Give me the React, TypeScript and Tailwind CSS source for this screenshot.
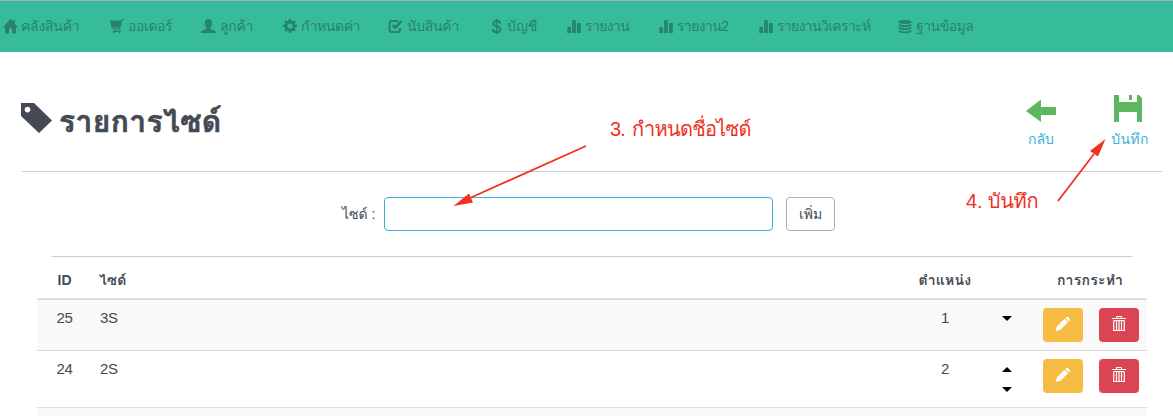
import type { ReactNode } from "react";

const thai = "font-['Liberation_Sans','Loma',sans-serif]";

const HomeIcon = () => (
  <svg className="h-[15px] w-[15px]" viewBox="0 0 15 15" fill="currentColor"><path d="M7.5 0 9.5 2.300V1h2.200v3.500L15 8.300h-2V14.500H9V9.500H6v5H2V8.300H0z" /></svg>
);
const CartIcon = () => (
  <svg className="h-[15px] w-[15px]" viewBox="0 0 15 15" fill="currentColor"><path d="M0 1.500h10.700L11.300.200H14v1.100h-1.800l-2.200 9H2.300v-1H9.100V8.600H1.500z" /><path d="M3 11.500h7l1 .8-.7 1.700H8.600v-1H4.800v1H3z" /></svg>
);
const UserIcon = () => (
  <svg className="h-[15px] w-[15px]" viewBox="0 0 15 15" fill="currentColor"><path d="M7.400 0C9.700 0 11 1.500 11 4c0 2-.6 3.500-1.600 4.600v1.100l4 1.800c1.100.5 1.600 1 1.600 2.500H0c0-1.500.5-2 1.600-2.500l3.800-1.800V8.600C4.400 7.500 3.800 6 3.800 4 3.800 1.500 5.100 0 7.400 0z" /></svg>
);
const GearIcon = () => (
  <svg className="h-[14px] w-[14px]" viewBox="0 0 14 14"><circle cx="7" cy="7" r="4" fill="none" stroke="currentColor" strokeWidth="2.800" /><path d="M7 0v2.500M7 11.500V14M0 7h2.500M11.500 7H14M2.050 2.050l1.800 1.800M10.150 10.150l1.800 1.800M11.950 2.050l-1.800 1.800M3.850 10.150l-1.800 1.800" fill="none" stroke="currentColor" strokeWidth="2.400" /></svg>
);
const CheckIcon = () => (
  <svg className="h-[15px] w-[15px]" viewBox="0 0 15 15" fill="none" stroke="currentColor"><path d="M10 2H4Q1.500 2 1.500 4.500v6Q1.500 13 4 13h5.500q2.500 0 2.500-2.500V9" strokeWidth="2" /><path d="m4.700 6 2.500 2.600L13.300 2.200" strokeWidth="2.600" /></svg>
);
const DollarIcon = () => (
  <svg className="h-[15px] w-[15px]" viewBox="0 0 15 15" fill="none" stroke="currentColor"><path d="M4.700 0v15" strokeWidth="1.600" /><path d="M8.300 4.600C8 2.700 6.500 2 4.600 2 2.500 2 1.300 3 1.300 4.600c0 3.500 7.300 1.800 7.300 5.600 0 2-1.500 2.900-3.900 2.900-2.300 0-3.700-1.100-3.900-3.100" strokeWidth="2" /></svg>
);
const StatsIcon = () => (
  <svg className="h-[15px] w-[15px]" viewBox="0 0 15 15" fill="currentColor"><rect x=".3" y="8" width="3.700" height="6" rx=".5" /><rect x="5.200" y="1" width="3.600" height="13" rx=".5" /><rect x="10" y="4" width="3.700" height="10" rx=".5" /></svg>
);
const DatabaseIcon = () => (
  <svg className="h-[15px] w-[15px]" viewBox="0 0 15 15" fill="currentColor"><path d="M.5 2.600C.5.300 13.500.300 13.500 2.600v.7c0 2.300-13 2.300-13 0zM.5 4.900q6.500 2.500 13 0v1.500q-1 1.500-6.500 1.500T.5 6.400zM.5 8.100q6.500 2.500 13 0v1.500q-1 1.500-6.500 1.500T.5 9.600zM.5 11.200q6.500 2.500 13 0v1.400q-1 1.700-6.500 1.700T.5 12.600z" /></svg>
);

const navItems: { label: string; icon: ReactNode; box: string }[] = [
  { label: "คลังสินค้า", icon: <HomeIcon />, box: "w-[107px] gap-[3px] tracking-[-0.25px]" },
  { label: "ออเดอร์", icon: <CartIcon />, box: "w-[91px] gap-[3px] tracking-[-0.4px]" },
  { label: "ลูกค้า", icon: <UserIcon />, box: "w-[82px] gap-1 tracking-[-0.3px]" },
  { label: "กำหนดค่า", icon: <GearIcon />, box: "w-[105px] gap-1 tracking-[-0.4px]" },
  { label: "นับสินค้า", icon: <CheckIcon />, box: "w-[104px] gap-1 tracking-[-0.3px]" },
  { label: "บัญชี", icon: <DollarIcon />, box: "w-[75px] gap-0" },
  { label: "รายงาน", icon: <StatsIcon />, box: "w-[92px] gap-[3px] tracking-[-0.6px]" },
  { label: "รายงาน2", icon: <StatsIcon />, box: "w-[100px] gap-[3px] tracking-[-0.6px]" },
  { label: "รายงานวิเคราะห์", icon: <StatsIcon />, box: "w-[139px] gap-[3px] tracking-[-0.65px]" },
  { label: "ฐานข้อมูล", icon: <DatabaseIcon />, box: "w-[90px] gap-[3px] tracking-[-0.5px]" },
];

const EditButton = () => (
  <button aria-label="แก้ไข" className="flex h-[34px] w-10 justify-center rounded-[4px] bg-[#f6bb42] pt-2 text-white">
    <svg className="h-4 w-4" viewBox="0 0 16 16" fill="currentColor"><path d="m2 10.200 7.500-7.500 3.500 3.500L5.500 13.700.500 15zM10.300 2l1-1q.8-.6 1.600.1l1.800 1.800q.7.800.1 1.500l-1 1z" /></svg>
  </button>
);
const DeleteButton = () => (
  <button aria-label="ลบ" className="flex h-[34px] w-10 justify-center rounded-[4px] bg-[#da4453] pt-2 text-white">
    <svg className="h-4 w-4" viewBox="0 0 16 16" fill="none" stroke="currentColor"><path d="M1 2.500h14M5.500 2V.500h5V2M2.500 4.500h11" /><path d="M2.700 5v9.500h10.600V5M5.500 5v9M8 5v9M10.500 5v9" strokeWidth="1.200" /></svg>
  </button>
);
const Caret = ({ up = false }: { up?: boolean }) => (
  <svg className="h-5 w-[10px]" viewBox="0 0 10 20" fill="#000">{up ? <path d="M5 8 10 13H0z" /> : <path d="M0 8h10l-5 5z" />}</svg>
);

export default function App() {
  return (
    <div className={`${thai} relative flex h-[416px] w-[1173px] flex-col overflow-hidden bg-white text-[#434a54]`}>
      <nav className="flex h-[52px] shrink-0 border-t border-[#a0b4c8] bg-[#37bc9b] pl-[3px] text-[#26836c]">
        {navItems.map((item) => (
          <a key={item.label} className={`flex h-[50px] shrink-0 items-center whitespace-nowrap text-[14px] ${item.box}`}>
            {item.icon}
            <span>{item.label}</span>
          </a>
        ))}
      </nav>
      <header className="ml-[22px] flex h-[120px] w-[1140px] shrink-0 justify-between border-b border-[#ccc]">
        <h1 className="flex items-start whitespace-nowrap pt-[50px] text-[30px] leading-[40px] font-bold tracking-[0.4px]">
          <svg className="-ml-px mr-[7px] mt-[1px] h-[31px] w-[31px]" viewBox="0 0 31 31" fill="currentColor"><path fillRule="evenodd" d="M0 0h13l18 17.500L18 30 0 13zM6.500 3.800a2.800 2.800 0 1 0 0 5.600 2.800 2.800 0 0 0 0-5.600z" /></svg>
          <span className="[-webkit-text-stroke:0.6px_#434a54]">รายการไซด์</span>
        </h1>
        <div className="mr-[2px] flex pt-[43px] text-[14px] text-[#3bafda]">
          <a className="flex w-[60px] flex-col items-center">
            <svg className="h-[34px] w-[30px]" viewBox="0 0 30 34" fill="#5cb85c"><path d="M0 16 15 4.500V12h15v8H15v7z" /></svg>
            <span>กลับ</span>
          </a>
          <a className="ml-[29px] flex w-[60px] flex-col items-center">
            <svg className="mr-[4px] h-[34px] w-[30px]" viewBox="0 0 30 34" fill="#5cb85c"><path d="M1 0h5v7h18V0h2l3 3v24h-5V17H6v10H1zM16 0h3v5h-3z" /></svg>
            <span className="tracking-[0.3px]">บันทึก</span>
          </a>
        </div>
      </header>
      <form className="ml-[342px] flex h-[84px] shrink-0 items-start pt-[25px] text-[14px]">
        <label htmlFor="size" className="w-[42px] whitespace-nowrap leading-[34px]">ไซด์ :</label>
        <input id="size" className="h-[34px] w-[389px] rounded-[4px] border border-[#3bafda] bg-white outline-none" />
        <button type="button" className="ml-[13px] h-[34px] w-[49px] rounded-[4px] border border-[#aab2bd] bg-white">เพิ่ม</button>
      </form>
      <div className="ml-[52px] w-[1080px] shrink-0 border-t border-[#ccc]" />
      <table className="ml-[37px] w-[1110px] table-fixed border-collapse text-[15px] tracking-[-0.3px]">
        <colgroup><col className="w-[55px]" /><col className="w-[808px]" /><col className="w-[90px]" /><col className="w-[34px]" /><col className="w-[123px]" /></colgroup>
        <thead><tr className="h-[42px] border-b-2 border-[#ddd] text-[14px] tracking-[0.25px]">
          <th className="pt-[5px] tracking-normal">ID</th><th className="pt-[5px] pl-[7px] text-left">ไซด์</th><th className="pt-[5px]">ตำแหน่ง</th><th /><th className="pt-[5px] pl-[9px]">การกระทำ</th>
        </tr></thead>
        <tbody className="align-top">
          {[{ id: 25, name: "3S", position: 1 }, { id: 24, name: "2S", position: 2 }].map((row, index) => (
            <tr key={row.id} className={index === 0 ? "h-[51px] border-b border-[#ddd] bg-[#f9f9f9]" : "h-[57px] border-b border-[#ddd]"}>
              <td className="pt-[7px] text-center leading-[21px]">{row.id}</td>
              <td className="pt-[7px] pl-2 leading-[21px]">{row.name}</td>
              <td className="pt-[7px] text-center leading-[21px]">{row.position}</td>
              <td className="pt-2"><div className="flex flex-col items-center">{index > 0 && <Caret up />}<Caret /></div></td>
              <td className="pt-2"><div className="flex gap-4 pl-[19px]"><EditButton /><DeleteButton /></div></td>
            </tr>
          ))}
          <tr className="h-[20px] bg-[#f9f9f9]"><td colSpan={5} /></tr>
        </tbody>
      </table>
      <div className="absolute top-[114px] left-[610px] whitespace-nowrap text-[20px] leading-[30px] tracking-[-0.75px] text-[#f1301e]"><span className="mr-[2px]">3.</span> กำหนดชื่อไซด์</div>
      <div className="absolute top-[186px] left-[966px] whitespace-nowrap text-[20px] leading-[30px] tracking-[-0.2px] text-[#f1301e]">4. บันทึก</div>
      <svg className="pointer-events-none absolute inset-0 h-[416px] w-[1173px]" viewBox="0 0 1173 416" fill="#f1301e" stroke="#f1301e">
        <path d="M586 146 470 198M1058 201l36-47" strokeWidth="1.800" fill="none" />
        <path stroke="none" d="m453.500 206 15.500-12.500 4 9zM1105.500 139l-15.500 12 8 5.500z" />
      </svg>
    </div>
  );
}
